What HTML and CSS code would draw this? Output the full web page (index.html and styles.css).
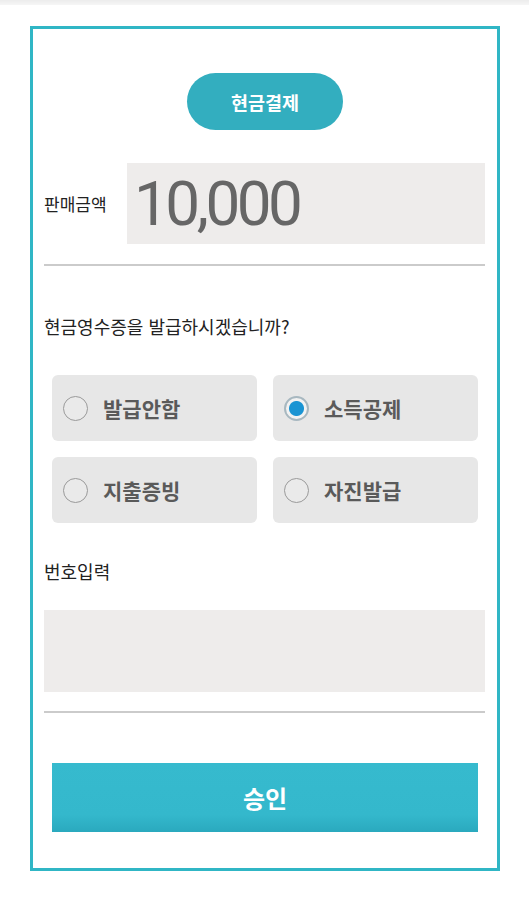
FILE: index.html
```html
<!DOCTYPE html>
<html lang="ko">
<head>
<meta charset="utf-8">
<link rel="stylesheet" href="styles.css">
</head>
<body>
<div class="topbar"></div>
<div class="frame">
  <div class="pill-wrap"><div class="pill">현금결제</div></div>
  <div class="amount-row">
    <div class="amount-label">판매금액</div>
    <div class="amount-box">10,000</div>
  </div>
  <div class="sep sep1"></div>
  <div class="question">현금영수증을 발급하시겠습니까?</div>
  <div class="options">
    <div class="opt"><span class="radio"></span><span class="opt-text">발급안함</span></div>
    <div class="opt"><span class="radio checked"></span><span class="opt-text">소득공제</span></div>
    <div class="opt"><span class="radio"></span><span class="opt-text">지출증빙</span></div>
    <div class="opt"><span class="radio"></span><span class="opt-text">자진발급</span></div>
  </div>
  <div class="num-label">번호입력</div>
  <div class="num-box"></div>
  <div class="sep sep2"></div>
  <div class="approve">승인</div>
</div>
</body>
</html>
```
FILE: styles.css
```css
html, body { margin: 0; padding: 0; background: #fff; }
body { font-family: "Noto Sans CJK KR", "Noto Sans", sans-serif; width: 529px; height: 900px; overflow: hidden; }
.topbar { height: 5px; background: linear-gradient(#ececec, #f6f6f6); }
.frame {
  box-sizing: border-box;
  margin: 21px 0 0 30px;
  width: 470px;
  height: 845px;
  border: 3px solid #30b6c5;
  padding: 44px 12px 0 11px;
  display: flex;
  flex-direction: column;
}
.pill-wrap { display: flex; justify-content: center; }
.pill {
  width: 156px; height: 57px; border-radius: 29px;
  background: #33aebf; color: #fff;
  font-size: 18.5px; font-weight: 700;
  display: flex; align-items: center; justify-content: center;
  margin-left: 1px;
}
.amount-row { display: flex; align-items: center; margin-top: 33px; height: 81px; }
.amount-label { width: 83px; font-size: 17px; color: #222; }
.amount-box {
  flex: 1; height: 81px; background: #eeeceb;
  font-family: Roboto, "Noto Sans", sans-serif;
  font-size: 62px; color: #666; letter-spacing: -3.5px;
  display: flex; align-items: center; padding-left: 7px;
  box-sizing: border-box;
}
.sep { height: 2px; background: #cbcbcb; }
.sep1 { margin-top: 20px; }
.question { margin-top: 47px; font-size: 18px; line-height: 26px; color: #222; }
.options {
  margin: 36px 7px 0 8px;
  display: grid; grid-template-columns: 1fr 1fr; column-gap: 16px; row-gap: 16px;
}
.opt {
  height: 66px; background: #e7e7e7; border-radius: 6px;
  display: flex; align-items: center; padding-left: 11px;
}
.radio {
  box-sizing: border-box; width: 25px; height: 25px; border-radius: 50%;
  border: 1.5px solid #9a9a9a; background: #eaeaea; flex: none;
}
.radio.checked {
  border: 2px solid #a8b8c0;
  background: radial-gradient(circle, #1a94d3 0 7px, #f2f2f2 8px);
}
.opt-text { margin-left: 15px; font-size: 21px; font-weight: 700; color: #5a5a5a; }
.num-label { margin-top: 35px; font-size: 18px; line-height: 26px; color: #222; }
.num-box { margin-top: 26px; height: 82px; background: #eeeceb; }
.sep2 { margin-top: 19px; }
.approve {
  margin: 50px 7px 0 8px; height: 69px;
  background: linear-gradient(#36bace 0%, #34b8cc 75%, #2aa9be 100%);
  color: #fff; font-size: 24px; font-weight: 700;
  display: flex; align-items: center; justify-content: center;
}
```
